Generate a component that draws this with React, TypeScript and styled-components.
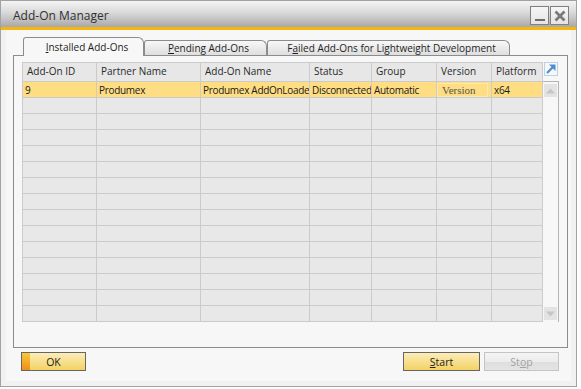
import React from 'react';
import styled, { createGlobalStyle } from 'styled-components';

const GlobalStyle = createGlobalStyle`
  html, body {
    margin: 0;
    padding: 0;
    background: #ffffff;
  }
  body {
    font-family: "Open Sans", "Liberation Sans", sans-serif;
    color: #222;
  }
`;

const columns = [
  { title: 'Add-On ID', width: 74 },
  { title: 'Partner Name', width: 104 },
  { title: 'Add-On Name', width: 109 },
  { title: 'Status', width: 62 },
  { title: 'Group', width: 65 },
  { title: 'Version', width: 55 },
  { title: 'Platform', width: 51 },
];

const rows = [
  ['9', 'Produmex', 'Produmex AddOnLoader', 'Disconnected', 'Automatic', 'Version', 'x64'],
];

const ROW_COUNT = 15;

const App = () => {
  const filled = [...rows, ...Array.from({ length: ROW_COUNT - rows.length }, () => null)];

  return (
    <>
      <GlobalStyle />
      <Window>
        <TitleBar>
          <Title>Add-On Manager</Title>
          <TitleButtons>
            <TitleButton aria-label="Minimize">
              <svg width="16" height="16" viewBox="0 0 16 16">
                <rect x="3" y="11" width="10" height="2" fill="#6e6e6e" />
              </svg>
            </TitleButton>
            <TitleButton aria-label="Close">
              <svg width="16" height="16" viewBox="0 0 16 16">
                <path d="M3.5 3.5 L12.5 12.5 M12.5 3.5 L3.5 12.5" stroke="#7a7a7a" strokeWidth="2.8" />
              </svg>
            </TitleButton>
          </TitleButtons>
        </TitleBar>

        <Body>
          <TabStrip>
            <Tab $active $width={121}>
              <span><u>I</u>nstalled Add-Ons</span>
            </Tab>
            <Tab $width={123}>
              <span><u>P</u>ending Add-Ons</span>
            </Tab>
            <Tab $width={243}>
              <span>F<u>a</u>iled Add-Ons for Lightweight Development</span>
            </Tab>
          </TabStrip>

          <Panel>
            <Grid>
              {columns.map((c) => (
                <HeaderCell key={c.title}>{c.title}</HeaderCell>
              ))}
              {filled.map((row, r) =>
                columns.map((c, i) => (
                  <Cell key={`${r}-${c.title}`} $selected={!!row}>
                    {row && i === 5 ? <FocusBox>{row[i]}</FocusBox> : row ? row[i] : null}
                  </Cell>
                ))
              )}
            </Grid>
            <SideColumn>
              <ExpandIcon>
                <svg width="14" height="14" viewBox="0 0 14 14">
                  <rect x="0.5" y="0.5" width="13" height="13" fill="none" stroke="#b9d2ec" />
                  <path d="M3 11 L10 4" stroke="#4c8dce" strokeWidth="2.2" />
                  <path d="M5 2.5 H11.5 V9 Z" fill="#4c8dce" />
                </svg>
              </ExpandIcon>
              <ScrollBar>
                <ScrollButton>
                  <svg width="9" height="6" viewBox="0 0 9 6">
                    <path d="M0 5.5 L4.5 0.5 L9 5.5 Z" fill="#c6c6c6" />
                  </svg>
                </ScrollButton>
                <ScrollButton>
                  <svg width="9" height="6" viewBox="0 0 9 6">
                    <path d="M0 0.5 L4.5 5.5 L9 0.5 Z" fill="#c6c6c6" />
                  </svg>
                </ScrollButton>
              </ScrollBar>
            </SideColumn>
          </Panel>

          <Footer>
            <OkButton>
              <OkStrip />
              <span>OK</span>
            </OkButton>
            <Spacer />
            <ActionButton $width={77}>
              <span><u>S</u>tart</span>
            </ActionButton>
            <ActionButton $width={75} $disabled>
              <span>St<u>o</u>p</span>
            </ActionButton>
          </Footer>
        </Body>
      </Window>
    </>
  );
};

const Window = styled.div`
  box-sizing: border-box;
  width: 577px;
  height: 387px;
  border: 1px solid #a2a2a2;
  display: flex;
  flex-direction: column;
  background: #f7f7f7;
`;

const TitleBar = styled.div`
  height: 23px;
  padding: 3px 7px 0 12px;
  display: flex;
  align-items: center;
  justify-content: space-between;
  background: linear-gradient(#f4f4f4, #d9d9d9 45%, #a8a8a8);
  border-bottom: 3px solid #f6b60e;
`;

const Title = styled.div`
  font-size: 12px;
  color: #303030;
`;

const TitleButtons = styled.div`
  display: flex;
  gap: 1px;
`;

const TitleButton = styled.button`
  box-sizing: border-box;
  width: 19px;
  height: 19px;
  padding: 0;
  border: 1px solid #808080;
  background: linear-gradient(#f6f6f6, #e4e4e4);
  display: flex;
  align-items: center;
  justify-content: center;
`;

const Body = styled.div`
  flex: 1;
  display: flex;
  flex-direction: column;
  padding: 7px 8px 0 12px;
  box-shadow: inset 5px 0 #f1f1f1, inset -5px 0 #f1f1f1, inset 0 -5px #f1f1f1;
`;

const TabStrip = styled.div`
  height: 18px;
  margin-left: 10px;
  display: flex;
  align-items: flex-end;
  position: relative;
  z-index: 1;
`;

const Tab = styled.div<{ $active?: boolean; $width: number }>`
  box-sizing: border-box;
  width: ${(p) => p.$width}px;
  height: ${(p) => (p.$active ? 19 : 15)}px;
  margin-bottom: ${(p) => (p.$active ? -1 : 0)}px;
  padding-left: ${(p) => (p.$active ? 7 : 6)}px;
  border: 1px solid #8c8c8c;
  border-bottom: none;
  border-radius: 3px 6px 0 0;
  background: ${(p) => (p.$active ? '#f7f7f7' : 'linear-gradient(#f8f8f8, #dedede)')};
  display: flex;
  align-items: center;
  justify-content: center;
  font-size: 10px;
  color: #1e1e1e;
  white-space: nowrap;
`;

const Panel = styled.div`
  box-sizing: border-box;
  height: 293px;
  border: 1px solid #8c8c8c;
  background: #f7f7f7;
  padding: 6px 8px 0 8px;
  display: flex;
  align-items: flex-start;
`;

const Grid = styled.div`
  display: grid;
  grid-template-columns: ${columns.map((c) => `${c.width}px`).join(' ')};
  grid-auto-rows: 16px;
  grid-template-rows: 19px;
  border-left: 1px solid #cbcbcb;
  border-top: 1px solid #cbcbcb;
`;

const HeaderCell = styled.div`
  box-sizing: border-box;
  height: 19px;
  padding: 0 0 2px 4px;
  border-right: 1px solid #cbcbcb;
  border-bottom: 1px solid #cbcbcb;
  background: #e7e7e7;
  display: flex;
  align-items: center;
  font-size: 10px;
  color: #2a2a2a;
  white-space: nowrap;
  overflow: hidden;
`;

const Cell = styled.div<{ $selected?: boolean }>`
  box-sizing: border-box;
  height: 16px;
  padding-left: 2px;
  border-right: 1px solid #cbcbcb;
  border-bottom: 1px solid #cbcbcb;
  background: ${(p) => (p.$selected ? '#fedd83' : '#e8e8e8')};
  display: flex;
  align-items: center;
  font-size: 10px;
  letter-spacing: -0.3px;
  color: #1a1a1a;
  white-space: nowrap;
  overflow: hidden;
`;

const FocusBox = styled.div`
  box-sizing: border-box;
  width: 51px;
  height: 14px;
  margin-left: -2px;
  padding-left: 4px;
  border: 1px solid #fbe9b2;
  display: flex;
  align-items: center;
  font-family: "Liberation Serif", "DejaVu Serif", serif;
  font-size: 11px;
  letter-spacing: 0;
  color: #555;
`;

const SideColumn = styled.div`
  width: 16px;
  display: flex;
  flex-direction: column;
`;

const ExpandIcon = styled.div`
  width: 14px;
  height: 14px;
  margin-left: 1px;
  margin-bottom: 5px;
  display: flex;
`;

const ScrollBar = styled.div`
  box-sizing: border-box;
  height: 241px;
  padding: 2px 1px 2px 1px;
  border-top: 1px solid #b4b4b4;
  border-right: 1px solid #b4b4b4;
  display: flex;
  flex-direction: column;
  justify-content: space-between;
`;

const ScrollButton = styled.div`
  width: 13px;
  height: 13px;
  background: #e3e3e3;
  display: flex;
  align-items: center;
  justify-content: center;
`;

const Footer = styled.div`
  margin-top: 4px;
  padding: 0 9px 0 8px;
  display: flex;
  align-items: center;
  gap: 4px;
`;

const Spacer = styled.div`
  flex: 1;
`;

const OkButton = styled.button`
  box-sizing: border-box;
  width: 65px;
  height: 19px;
  padding: 0;
  border: 1px solid #666;
  background: linear-gradient(#fcedb9, #f3d264);
  position: relative;
  display: flex;
  align-items: center;
  justify-content: center;
  font-family: "Open Sans", "Liberation Sans", sans-serif;
  font-size: 10.5px;
  color: #222;
`;

const OkStrip = styled.span`
  position: absolute;
  left: 0;
  top: 0;
  bottom: 0;
  width: 8px;
  background: linear-gradient(#f8c93c, #ee901b);
`;

const ActionButton = styled.button<{ $width: number; $disabled?: boolean }>`
  box-sizing: border-box;
  width: ${(p) => p.$width}px;
  height: 19px;
  padding: 0;
  border: 1px solid ${(p) => (p.$disabled ? '#c4c4c4' : '#666')};
  background: ${(p) =>
    p.$disabled
      ? 'linear-gradient(#f4f4f4, #ececec 50%, #dedede 51%, #e4e4e4)'
      : 'linear-gradient(#fcedb9, #f3d264)'};
  display: flex;
  align-items: center;
  justify-content: center;
  font-family: "Open Sans", "Liberation Sans", sans-serif;
  font-size: 10.5px;
  color: ${(p) => (p.$disabled ? '#a3a3a3' : '#222')};
`;

export default App;
